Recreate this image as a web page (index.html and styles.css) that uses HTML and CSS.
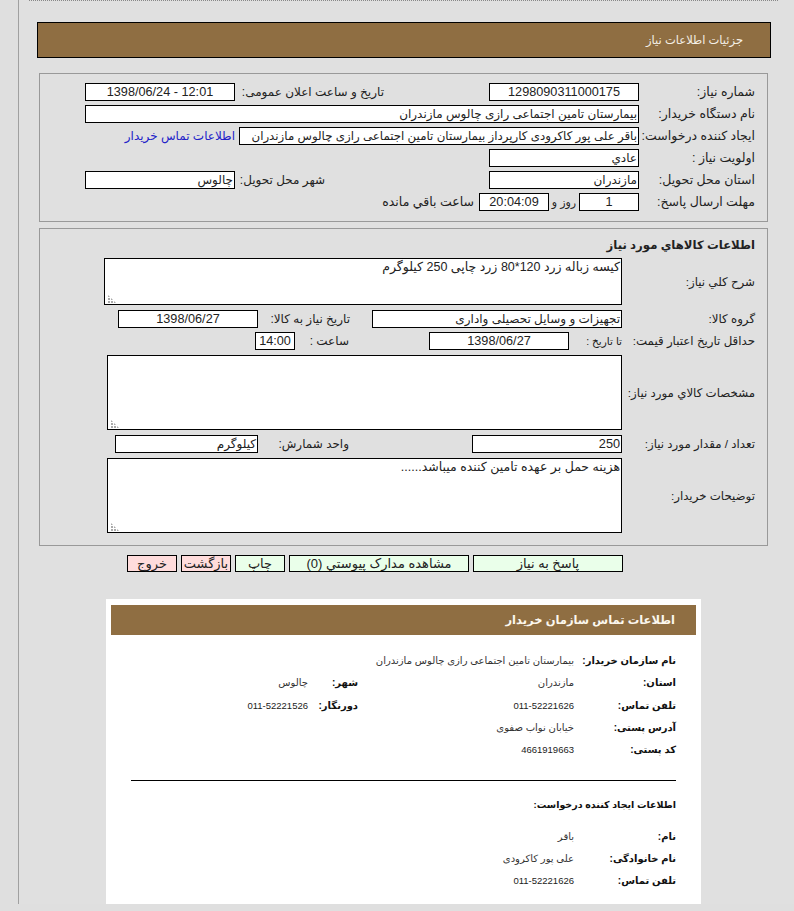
FILE: index.html
```html
<!DOCTYPE html>
<html lang="fa" dir="rtl">
<head>
<meta charset="utf-8">
<title>جزئیات اطلاعات نیاز</title>
<link rel="stylesheet" href="styles.css">
</head>
<body>
<div class="frame">
  <div class="dots"></div>
  <div class="head">جزئیات اطلاعات نیاز</div>

  <section class="panel p1">
    <div class="row">
      <div class="lab">شماره نیاز:</div>
      <div class="f w150 c num">1298090311000175</div>
      <div class="push lab2 w150l">تاریخ و ساعت اعلان عمومی:</div>
      <div class="f w150 c num ltr">1398/06/24 - 12:01</div>
    </div>
    <div class="row">
      <div class="lab">نام دستگاه خریدار:</div>
      <div class="f w554">بیمارستان تامین اجتماعی رازی چالوس مازندران</div>
    </div>
    <div class="row">
      <div class="lab">ایجاد کننده درخواست:</div>
      <div class="f w400 tight">باقر علی پور کاکرودی کارپرداز بیمارستان تامین اجتماعی رازی چالوس مازندران</div>
      <a class="link" href="#">اطلاعات تماس خریدار</a>
    </div>
    <div class="row">
      <div class="lab">اولویت نیاز :</div>
      <div class="f w150">عادي</div>
    </div>
    <div class="row">
      <div class="lab">استان محل تحویل:</div>
      <div class="f w150">مازندران</div>
      <div class="push lab2 w150l city">شهر محل تحویل:</div>
      <div class="f w150">چالوس</div>
    </div>
    <div class="row">
      <div class="lab">مهلت ارسال پاسخ:</div>
      <div class="f w60 c num">1</div>
      <div class="txt w30">روز و</div>
      <div class="f w70 c num">20:04:09</div>
      <div class="txt after">ساعت باقي مانده</div>
    </div>
  </section>

  <section class="panel p2">
    <h2 class="ptitle">اطلاعات كالاهاي مورد نياز</h2>
    <div class="row h47">
      <div class="lab">شرح کلي نياز:</div>
      <div class="f area w518">کیسه زباله زرد 120*80 زرد چاپی 250 کیلوگرم<i class="grip"></i></div>
    </div>
    <div class="row">
      <div class="lab">گروه کالا:</div>
      <div class="f w250">تجهیزات و وسایل تحصیلی واداری</div>
      <div class="lab2 w114">تاریخ نیاز به کالا:</div>
      <div class="f w140 c num">1398/06/27</div>
    </div>
    <div class="row m5">
      <div class="lab">حداقل تاریخ اعتبار قیمت:</div>
      <div class="txt w53">تا تاریخ :</div>
      <div class="f w140 c num">1398/06/27</div>
      <div class="lab2 w134">ساعت :</div>
      <div class="f w40 c num">14:00</div>
    </div>
    <div class="row h75">
      <div class="lab">مشخصات کالاي مورد نياز:</div>
      <div class="f area w515"><i class="grip"></i></div>
    </div>
    <div class="row m5">
      <div class="lab">تعداد / مقدار مورد نیاز:</div>
      <div class="f w150 num">250</div>
      <div class="lab2 w214">واحد شمارش:</div>
      <div class="f w143">کیلوگرم</div>
    </div>
    <div class="row h75">
      <div class="lab">توضیحات خریدار:</div>
      <div class="f area w515">هزینه حمل بر عهده تامین کننده میباشد......<i class="grip"></i></div>
    </div>
  </section>

  <div class="btns">
    <div class="btn go b150">پاسخ به نیاز</div>
    <div class="btn go b180">مشاهده مدارک پیوستي (0)</div>
    <div class="btn go b50">چاپ</div>
    <div class="btn stop b50">بازگشت</div>
    <div class="btn stop b50">خروج</div>
  </div>

  <section class="card">
    <div class="cardhead">اطلاعات تماس سازمان خریدار</div>
    <div class="cbody">
      <div class="crow"><b>نام سازمان خریدار:</b><span class="v">بیمارستان تامین اجتماعی رازی چالوس مازندران</span></div>
      <div class="crow"><b>استان:</b><span class="v">مازندران</span><b class="b2">شهر:</b><span class="v">چالوس</span></div>
      <div class="crow"><b>تلفن تماس:</b><span class="v d">011-52221626</span><b class="b2">دورنگار:</b><span class="v d">011-52221526</span></div>
      <div class="crow"><b>آدرس پستی:</b><span class="v">خیابان نواب صفوی</span></div>
      <div class="crow"><b>کد پستی:</b><span class="v d">4661919663</span></div>
      <hr class="rule">
      <h3 class="ctitle">اطلاعات ایجاد کننده درخواست:</h3>
      <div class="crow"><b>نام:</b><span class="v">باقر</span></div>
      <div class="crow"><b>نام خانوادگی:</b><span class="v">علی پور کاکرودی</span></div>
      <div class="crow"><b>تلفن تماس:</b><span class="v d">011-52221626</span></div>
    </div>
  </section>
</div>
</body>
</html>
```
FILE: styles.css
```css
* { box-sizing: border-box; }
html, body { margin: 0; height: 911px; overflow: hidden; }
body { background: #dfdfdf; font: 12.5px/16px "Liberation Sans", "DejaVu Sans", sans-serif; color: #222; }
.frame { margin-left: 18px; width: 776px; height: 904px; border-left: 1px solid #a0a0a0; background: #e0e0e0; direction: ltr; overflow: hidden; }
.frame > * { direction: rtl; }
.dots { height: 1px; margin-left: 10px; width: 750px; background: repeating-linear-gradient(90deg, #888 0 1px, transparent 1px 2px); }
.head { margin: 21px 0 0 18px; width: 734px; height: 36px; border: 1px solid #000; background: #8f6e42; color: #f5f0e6; font-size: 11.5px; line-height: 34px; padding-right: 27px; }
.panel { margin-left: 20px; width: 729px; border: 1px solid #999; padding-right: 12px; padding-left: 45px; }
.p1 { margin-top: 15px; height: 149px; padding-top: 9px; }
.p2 { margin-top: 6px; height: 318px; padding-top: 7px; padding-left: 0; }
.row { display: flex; height: 18px; margin-bottom: 4px; align-items: center; white-space: nowrap; }
.m5 { margin-bottom: 5px; }
.lab { width: 116px; flex: none; }
.p2 .lab { width: 133px; font-size: 11.8px; }
.lab2 { flex: none; padding-right: 1px; font-size: 12px; }
.push { margin-right: auto; }
.city { padding-right: 60px; }
.f { height: 18px; background: #fff; border: 1px solid #000; font-size: 12px; line-height: 16px; padding: 0 1px; white-space: nowrap; overflow: hidden; color: #222; flex: none; }
.num { font-size: 12.7px; }
.c { text-align: center; }
.ltr { direction: ltr; }
.tight { font-size: 11.8px; }
.w150 { width: 150px; }
.w554 { width: 554px; }
.w400 { width: 400px; }
.w60 { width: 60px; }
.w70 { width: 70px; }
.w30 { width: 30px; text-align: center; font-size: 11px; }
.w140 { width: 140px; }
.w40 { width: 40px; }
.w250 { width: 250px; }
.w143 { width: 143px; }
.w518 { width: 518px; }
.w515 { width: 515px; }
.w150l { width: 150px; }
.w114 { width: 114px; padding-right: 22px; }
.w134 { width: 134px; padding-right: 80px; }
.w214 { width: 214px; padding-right: 123px; }
.w53 { width: 53px; flex: none; font-size: 10.5px; }
.txt { flex: none; }
.after { padding-right: 5px; }
.link { color: #2222c8; text-decoration: none; margin-right: 4px; font-size: 12px; }
.ptitle { font-size: 11.7px; line-height: 18px; margin: 0; font-weight: bold; height: 22px; }
.h47 { height: 47px; margin-bottom: 5px; }
.h75 { height: 75px; margin-bottom: 5px; }
.area { height: 100%; position: relative; white-space: normal; font-size: 12.5px; }
.grip { position: absolute; left: 3px; bottom: 1px; width: 8px; height: 8px; background: radial-gradient(circle at 1px 1px, #aaa 0.8px, transparent 0.9px) 0 0 / 3px 3px; clip-path: polygon(0 0, 100% 100%, 0 100%); }
.btns { display: flex; gap: 4px; margin: 9px 0 0 108px; width: 496px; }
.btn { height: 17px; line-height: 15px; font-size: 13px; border: 1px solid #000; text-align: center; flex: none; white-space: nowrap; }
.go { background: #eaffea; }
.stop { background: #ffdcdc; }
.b150 { width: 150px; }
.b180 { width: 180px; }
.b50 { width: 50px; }
.card { margin: 27px 0 0 87px; width: 595px; height: 305px; background: #fff; padding: 6px 5px 0; }
.cardhead { height: 30px; background: #8f6e42; color: #fbf7ee; font-weight: bold; font-size: 11.5px; line-height: 30px; padding-right: 21px; }
.cbody { padding: 15px 20px 0; }
.crow { display: flex; height: 22.3px; align-items: center; white-space: nowrap; }
.crow b { width: 102px; flex: none; font-weight: bold; font-size: 10px; color: #111; }
.v { width: 216px; flex: none; font-size: 10px; color: #333; }
.d { font-size: 9.5px; color: #222; }
.crow .b2 { width: 50px; }
.rule { border: 0; border-top: 1px solid #000; margin: 19px 0 0; }
.ctitle { font-size: 9.5px; line-height: 16px; margin: 16px 0 12px; font-weight: bold; color: #111; }
```
